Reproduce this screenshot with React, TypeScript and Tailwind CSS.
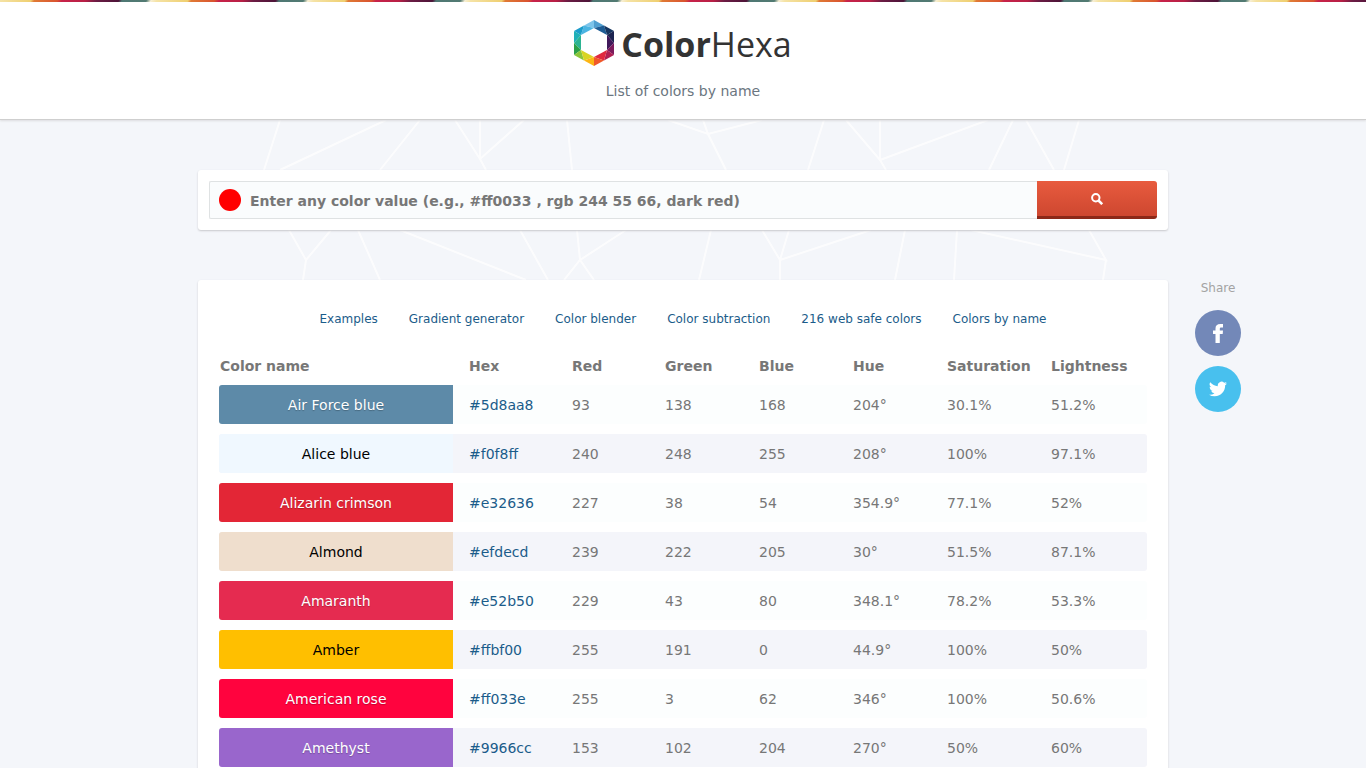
import type { ReactNode } from 'react'

const tools = ['Examples', 'Gradient generator', 'Color blender', 'Color subtraction', '216 web safe colors', 'Colors by name']

const columns = ['Hex', 'Red', 'Green', 'Blue', 'Hue', 'Saturation', 'Lightness']

const colors = [
  { name: 'Air Force blue', hex: '#5d8aa8', dark: true, values: ['93', '138', '168', '204°', '30.1%', '51.2%'] },
  { name: 'Alice blue', hex: '#f0f8ff', dark: false, values: ['240', '248', '255', '208°', '100%', '97.1%'] },
  { name: 'Alizarin crimson', hex: '#e32636', dark: true, values: ['227', '38', '54', '354.9°', '77.1%', '52%'] },
  { name: 'Almond', hex: '#efdecd', dark: false, values: ['239', '222', '205', '30°', '51.5%', '87.1%'] },
  { name: 'Amaranth', hex: '#e52b50', dark: true, values: ['229', '43', '80', '348.1°', '78.2%', '53.3%'] },
  { name: 'Amber', hex: '#ffbf00', dark: false, values: ['255', '191', '0', '44.9°', '100%', '50%'] },
  { name: 'American rose', hex: '#ff033e', dark: true, values: ['255', '3', '62', '346°', '100%', '50.6%'] },
  { name: 'Amethyst', hex: '#9966cc', dark: true, values: ['153', '102', '204', '270°', '50%', '60%'] },
]

function Stripe() {
  return (
    <div className="h-[2px] bg-[repeating-linear-gradient(120deg,#f5e3a6_0px,#efcf70_27px,#e07a35_30px,#d9532f_50px,#c8234a_54px,#b81f45_74px,#6b1c44_84px,#4d1438_103px,#4f7874_106px,#527a72_127px,#f7efd5_131px,#f5e3a6_136px)]" />
  )
}

function Logo() {
  return (
    <svg width="40" height="46" viewBox="0 0 40 46" aria-hidden="true">
      <path d="M20 0L10 5.500L20 8Z" fill="#7cc4ea" />
      <path d="M20 0L30 5.500L20 8Z" fill="#4f9fd0" />
      <path d="M10 5.500L20 8L13.500 11.500L7 15Z" fill="#4bb4e2" />
      <path d="M10 5.500L0 11L7 15Z" fill="#1b9ccb" />
      <path d="M30 5.500L20 8L33 15Z" fill="#1d5c94" />
      <path d="M30 5.500L40 11L33 15Z" fill="#153560" />
      <path d="M0 11L7 15L0 23Z" fill="#1fb0b8" />
      <path d="M7 15V30L0 23Z" fill="#2bb392" />
      <path d="M0 23L7 30L0 35Z" fill="#2ba047" />
      <path d="M40 11L33 15L40 23Z" fill="#1c2450" />
      <path d="M33 15V30L40 23Z" fill="#40195a" />
      <path d="M40 23L33 30L40 35Z" fill="#7d1b5c" />
      <path d="M0 35L7 30L10 40.500Z" fill="#8bc53a" />
      <path d="M7 30L20 37L10 40.500Z" fill="#d9d423" />
      <path d="M10 40.500L20 37V46Z" fill="#fcb514" />
      <path d="M40 35L33 30L30 40.500Z" fill="#b01f52" />
      <path d="M33 30L20 37L30 40.500Z" fill="#e0293f" />
      <path d="M30 40.500L20 37V46Z" fill="#f0582a" />
    </svg>
  )
}

function Mesh() {
  return (
    <svg className="absolute top-0 left-1/2 -translate-x-1/2 opacity-75" width="970" height="160" viewBox="198 120 970 160" fill="none" stroke="#ffffff" strokeWidth="2" aria-hidden="true">
      <path d="M280 120L264 170M386 120L280 170M420 120L380 170M455 120L480 159L524 120M480 120V159L486 170M567 120L572 170M668 120L708 134L762 120M703 120L708 134L726 170" />
      <path d="M824 120L808 170M846 120L880 160L988 120M880 120V160L886 170M1013 120L989 170M1026 120L1054 170M1079 120L1064 170" />
      <path d="M289 230L306 260L331 230M306 260L303 280M358 230L380 280M400 230L526 280M520 230L548 280M577 230L580 260L626 230M564 280L580 260L594 280" />
      <path d="M711 230L699 280M762 230L780 260L871 230M789 230L780 260V280M905 230L895 280M957 230L954 280M971 230L1106 260L1089 230M1106 260L1103 280" />
    </svg>
  )
}

function ShareLink({ label, className, children }: { label: string; className: string; children: ReactNode }) {
  return (
    <a href="#" aria-label={label} className={`flex size-[46px] items-center justify-center rounded-full ${className}`}>
      {children}
    </a>
  )
}

function Search() {
  return (
    <form className="flex rounded-[3px] bg-white p-[11px] shadow-[0_1px_2px_#c8c8cc]" onSubmit={e => e.preventDefault()}>
      <label htmlFor="color" className="flex h-[38px] w-[41px] items-center rounded-l-[2px] border border-r-0 border-[#dfe2e3] bg-[#fafcfd] pl-[9px]">
        <span className="size-[22px] rounded-full bg-[#ff0000]" />
      </label>
      <input
        id="color"
        type="text"
        aria-label="Color value"
        placeholder="Enter any color value (e.g., #ff0033 , rgb 244 55 66, dark red)"
        className="h-[38px] min-w-0 flex-1 border-y border-[#dfe2e3] bg-[#fafcfd] pt-[2px] text-sm font-bold outline-none placeholder:text-[#777777]"
      />
      <button type="submit" aria-label="Search" className="flex h-[38px] w-[120px] items-center justify-center rounded-r-[3px] border-b-[3px] border-[#8c2818] bg-linear-to-b from-[#e85b3e] to-[#ce4730] pt-px text-white">
        <svg width="12" height="12" viewBox="0 0 12 12" fill="none" stroke="currentColor" strokeWidth="2" aria-hidden="true">
          <circle cx="4.800" cy="4.800" r="3.700" />
          <path d="M7.500 7.500L11.200 11.200" strokeWidth="2.500" />
        </svg>
      </button>
    </form>
  )
}

export default function App() {
  return (
    <div className="h-screen overflow-hidden bg-[#f4f6fa] font-['Verdana','DejaVu_Sans',sans-serif] text-sm text-[#777777]">
      <header className="relative z-10 h-[120px] border-b border-[#cfcfcf] bg-white text-center shadow-[0_1px_2px_#dcdcdf]">
        <Stripe />
        <a href="#" className="mt-[18px] flex h-[46px] items-center justify-center gap-[7px] text-[#333333]">
          <Logo />
          <span className="pt-[2px] font-['Open_Sans','Noto_Sans',sans-serif] text-[34px] leading-[46px]">
            <b>Color</b>Hexa
          </span>
        </a>
        <h1 className="mt-[15px] text-sm leading-5 text-[#6b7680]">List of colors by name</h1>
      </header>

      <div className="relative">
        <Mesh />
        <div className="relative mx-auto w-full max-w-[970px] pt-[50px]">
          <Search />

          <main className="mt-[50px] rounded-[3px] bg-white px-[21px] pt-[29px] shadow-[0_1px_2px_#c8c8cc]">
            <nav className="flex justify-center gap-[31px] text-xs leading-5 text-[#1b5c8a]">
              {tools.map(t => <a key={t} href="#">{t}</a>)}
            </nav>

            <table className="mt-[18px] w-full table-fixed border-separate border-spacing-x-0 border-spacing-y-[10px]">
              <colgroup>
                <col className="w-[234px]" />
                <col className="w-[119px]" />
                <col className="w-[93px]" />
                <col className="w-[94px]" />
                <col className="w-[94px]" />
                <col className="w-[94px]" />
                <col className="w-[104px]" />
                <col />
              </colgroup>
              <thead>
                <tr className="h-[18px] text-left leading-[18px]">
                  <th className="p-0 pl-px">Color name</th>
                  {columns.map((c, i) => <th key={c} className={i === 0 ? 'p-0 pl-4' : 'p-0'}>{c}</th>)}
                </tr>
              </thead>
              <tbody>
                {colors.map((c, i) => (
                  <tr key={c.name} className={i % 2 ? 'h-[39px] bg-[#f4f5fa]' : 'h-[39px] bg-[#fcfefe]'}>
                    <td
                      className={`rounded-l-[3px] p-0 text-center ${c.dark ? 'text-white [text-shadow:0_1px_1px_#00000040]' : 'text-black'}`}
                      style={{ backgroundColor: c.hex }}
                    >
                      {c.name}
                    </td>
                    <td className="p-0 pl-4">
                      <a href="#" className="text-[#1b5c8a]">{c.hex}</a>
                    </td>
                    {c.values.map((v, j) => <td key={j} className="p-0 last:rounded-r-[3px]">{v}</td>)}
                  </tr>
                ))}
              </tbody>
            </table>
          </main>

          <aside className="absolute top-[160px] left-full ml-[27px] flex w-[46px] flex-col items-center gap-[10px]">
            <h2 className="mb-1 text-xs leading-4 text-[#a3a3a3]">Share</h2>
            <ShareLink label="Share on Facebook" className="bg-[#7388b8]">
              <svg width="11" height="19" viewBox="0 0 11 19" fill="#ffffff" aria-hidden="true">
                <path d="M10 0H7.500C4 0 2.500 1.500 2.500 4.500V6.500H0V10H2.500V19H6.800V10H9.700L10 6.500H6.800V5C6.800 4 7.100 3.500 8.100 3.500H10Z" />
              </svg>
            </ShareLink>
            <ShareLink label="Share on Twitter" className="bg-[#48c0ee]">
              <svg width="18" height="18" viewBox="0 0 24 24" fill="#ffffff" aria-hidden="true">
                <path d="M23.950 4.570a10 10 0 0 1-2.820.770 4.960 4.960 0 0 0 2.160-2.720 9.900 9.900 0 0 1-3.120 1.190 4.920 4.920 0 0 0-8.380 4.480A13.930 13.930 0 0 1 1.640 3.160a4.920 4.920 0 0 0 1.520 6.570 4.900 4.900 0 0 1-2.230-.610v.060a4.920 4.920 0 0 0 3.950 4.830 5 5 0 0 1-2.210.080 4.940 4.940 0 0 0 4.600 3.420A9.870 9.870 0 0 1 0 19.540a13.940 13.940 0 0 0 7.550 2.210c9.050 0 14-7.500 14-13.980 0-.210 0-.420-.020-.630a9.940 9.940 0 0 0 2.420-2.570z" />
              </svg>
            </ShareLink>
          </aside>
        </div>
      </div>
    </div>
  )
}
